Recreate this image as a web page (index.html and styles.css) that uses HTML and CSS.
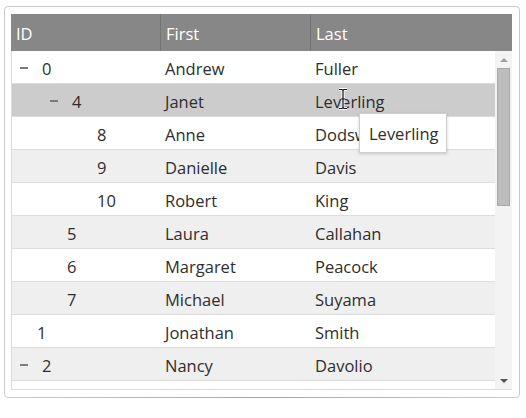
FILE: index.html
```html
<!DOCTYPE html>
<html>
<head>
<meta charset="utf-8">
<link rel="stylesheet" href="styles.css">
</head>
<body>
<div class="frame">
  <div class="grid">
    <div class="head">
      <div class="hc c1">ID</div>
      <div class="hc c2">First</div>
      <div class="hc c3">Last</div>
    </div>
    <div class="body">
      <div class="rows">
        <div class="row"><div class="cell c1 l0"><span class="tg"></span>0</div><div class="cell c2">Andrew</div><div class="cell c3">Fuller</div></div>
        <div class="row hover"><div class="cell c1 l1"><span class="tg"></span>4</div><div class="cell c2">Janet</div><div class="cell c3">Leverling</div></div>
        <div class="row"><div class="cell c1 l2"><span class="lf"></span>8</div><div class="cell c2">Anne</div><div class="cell c3">Dodsworth</div></div>
        <div class="row alt"><div class="cell c1 l2"><span class="lf"></span>9</div><div class="cell c2">Danielle</div><div class="cell c3">Davis</div></div>
        <div class="row"><div class="cell c1 l2"><span class="lf"></span>10</div><div class="cell c2">Robert</div><div class="cell c3">King</div></div>
        <div class="row alt"><div class="cell c1 l1"><span class="lf"></span>5</div><div class="cell c2">Laura</div><div class="cell c3">Callahan</div></div>
        <div class="row"><div class="cell c1 l1"><span class="lf"></span>6</div><div class="cell c2">Margaret</div><div class="cell c3">Peacock</div></div>
        <div class="row alt"><div class="cell c1 l1"><span class="lf"></span>7</div><div class="cell c2">Michael</div><div class="cell c3">Suyama</div></div>
        <div class="row"><div class="cell c1 l0"><span class="lf"></span>1</div><div class="cell c2">Jonathan</div><div class="cell c3">Smith</div></div>
        <div class="row alt"><div class="cell c1 l0"><span class="tg"></span>2</div><div class="cell c2">Nancy</div><div class="cell c3">Davolio</div></div>
        <div class="row"></div>
      </div>
      <div class="sbar">
        <span class="arr up"></span>
        <div class="thumb"></div>
        <span class="fill"></span>
        <span class="arr down"></span>
      </div>
    </div>
  </div>
  <div class="tip">Leverling</div>
  <svg class="cursor" width="12" height="22" viewBox="0 0 12 22">
    <path d="M2 1.5h3l1 1 1-1h3M6 2.5v17M2 20.5h3l1-1 1 1h3M4 11h4" fill="none" stroke="#fff" stroke-width="3"/>
    <path d="M2 1.5h3l1 1 1-1h3M6 2.5v17M2 20.5h3l1-1 1 1h3M4 11h4" fill="none" stroke="#111" stroke-width="1.2"/>
  </svg>
</div>
</body>
</html>
```

FILE: styles.css
```css
* { box-sizing: border-box; }
body {
  margin: 0;
  background: #fff;
  font-family: "Open Sans", "Noto Sans", sans-serif;
  font-size: 16.5px;
  color: #2e2e2e;
}
.frame {
  position: relative;
  margin: 6px 0 0 4px;
  width: 516px;
  height: 392px;
  border: 1px solid #c9c9c9;
  border-radius: 4px;
  padding: 7px 7px 7px 6px;
  background: #fff;
}
.frame::after {
  content: "";
  position: absolute;
  left: 30px;
  right: 30px;
  top: 100%;
  height: 18px;
  background: radial-gradient(ellipse at 50% 0%, rgba(0,0,0,0.18) 0%, rgba(0,0,0,0.07) 45%, rgba(0,0,0,0) 72%);
}
.grid {
  width: 501px;
}
.head {
  display: grid;
  grid-template-columns: 149px 150px 1fr;
  height: 37px;
  background: #878787;
  color: #fff;
}
.hc {
  display: flex;
  align-items: center;
  padding-left: 5px;
  padding-top: 2px;
}
.hc.c2, .hc.c3 {
  border-left: 1px solid #757575;
}
.body {
  display: flex;
  height: 339px;
  border-bottom: 1px solid #dcdcdc;
}
.rows {
  flex: 1;
  border-left: 1px solid #dcdcdc;
  overflow: hidden;
}
.row {
  display: grid;
  grid-template-columns: 148px 150px 1fr;
  height: 33px;
  border-bottom: 1px solid #dcdcdc;
  background: #fff;
}
.row.alt { background: #efefef; }
.row.hover { background: #cccccc; }
.cell {
  display: flex;
  align-items: center;
  padding-left: 5px;
  padding-top: 3px;
  white-space: nowrap;
}
.cell.l0 { padding-left: 4px; }
.cell.l1 { padding-left: 34px; }
.cell.l2 { padding-left: 64px; }
.tg {
  position: relative;
  width: 26px;
  height: 10px;
  flex: none;
}
.tg::before {
  content: "";
  position: absolute;
  left: 4px;
  top: 3px;
  width: 8px;
  height: 2px;
  background: #7a7a7a;
}
.lf {
  width: 21px;
  flex: none;
}
.sbar {
  position: relative;
  width: 17px;
  display: flex;
  flex-direction: column;
  align-items: center;
  background: #f3f3f3;
  padding: 7px 0 6px;
}
.arr {
  width: 0;
  height: 0;
  border-left: 4px solid transparent;
  border-right: 4px solid transparent;
}
.arr.up { border-bottom: 4px solid #a0a0a0; margin-bottom: 6px; }
.arr.down { border-top: 4px solid #555; }
.thumb {
  width: 13px;
  height: 138px;
  background: #bdbdbd;
  border: 1px solid #a8a8a8;
}
.fill { flex: 1; }
.tip {
  position: absolute;
  left: 354px;
  top: 106px;
  width: 88px;
  height: 40px;
  background: #fff;
  border: 1px solid #cfcfcf;
  box-shadow: 0 1px 3px rgba(0,0,0,0.18);
  display: flex;
  align-items: center;
  padding-left: 9px;
  color: #2e2e2e;
}
.cursor {
  position: absolute;
  left: 332px;
  top: 81px;
}
```
